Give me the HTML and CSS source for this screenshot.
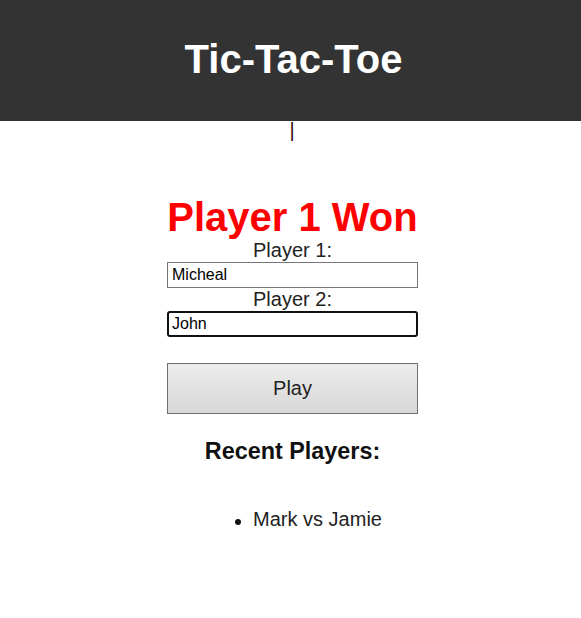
FILE: index.html
```html
<!DOCTYPE html>
<html lang="en">
<head>
<meta charset="utf-8">
<title>Tic-Tac-Toe</title>
<link rel="stylesheet" href="styles.css">
</head>
<body>
<header class="site-header">
  <h1 class="site-title">Tic-Tac-Toe</h1>
</header>
<div class="board-stub">|</div>
<div class="page">
  <main class="panel">
    <h1 class="result">Player 1 Won</h1>
    <label class="field-label" for="p1">Player 1:</label>
    <input class="field" id="p1" type="text" value="Micheal">
    <label class="field-label" for="p2">Player 2:</label>
    <input class="field field-focused" id="p2" type="text" value="John" autofocus>
    <button class="play-btn" type="button">Play</button>
    <h3 class="recent-title">Recent Players:</h3>
    <ul class="recent-list">
      <li class="recent-item">Mark vs Jamie</li>
    </ul>
  </main>
</div>
</body>
</html>
```
FILE: styles.css
```css
html, body {
  margin: 0;
  padding: 0;
  background: #fff;
}
body {
  font-family: "Liberation Sans", Arial, sans-serif;
  font-size: 20px;
  color: #222;
}
.site-header {
  height: 121px;
  background: #333333;
  display: flex;
  align-items: center;
  justify-content: center;
  box-sizing: border-box;
  padding: 0 0 4px 6px;
}
.site-title {
  margin: 0;
  color: #fff;
  font-size: 40px;
  font-weight: bold;
  line-height: 40px;
}
.board-stub {
  text-align: center;
  line-height: 19px;
  color: #3a0a0a;
  padding-left: 3px;
}
.page {
  padding-left: 4px;
}
.panel {
  width: 251px;
  margin: 0 auto;
  display: flex;
  flex-direction: column;
  align-items: stretch;
}
.result {
  margin: 55px 0 0;
  color: #ff0000;
  font-size: 40px;
  font-weight: bold;
  line-height: 44px;
  text-align: center;
  white-space: nowrap;
}
.field-label {
  display: block;
  text-align: center;
  line-height: 22px;
  color: #222;
}
.field {
  margin: 1px 0 0;
  height: 26px;
  box-sizing: border-box;
  border: 1px solid #767676;
  border-radius: 0;
  padding: 0 4px;
  font-family: "Liberation Sans", Arial, sans-serif;
  font-size: 16px;
  color: #000;
  background: #fff;
  outline: none;
}
.field-focused {
  border: 2px solid #101010;
  border-radius: 3px;
  padding: 0 3px;
}
.play-btn {
  margin-top: 26px;
  height: 51px;
  border: 1px solid #6f6f6f;
  border-radius: 0;
  background: linear-gradient(#ececec, #d8d8d8);
  font-family: "Liberation Sans", Arial, sans-serif;
  font-size: 20px;
  color: #222;
  padding: 0;
}
.recent-title {
  margin: 24px 0 0;
  font-size: 23.4px;
  font-weight: bold;
  text-align: center;
  color: #111;
}
.recent-list {
  margin: 43px 0 0;
  padding: 0 0 0 32px;
  text-align: center;
  list-style: none;
  color: #222;
}
.recent-item {
  line-height: 23px;
  white-space: nowrap;
}
.recent-item::before {
  content: "";
  display: inline-block;
  width: 6px;
  height: 6px;
  border-radius: 50%;
  background: #111;
  margin-right: 12px;
  vertical-align: 1px;
}
```
